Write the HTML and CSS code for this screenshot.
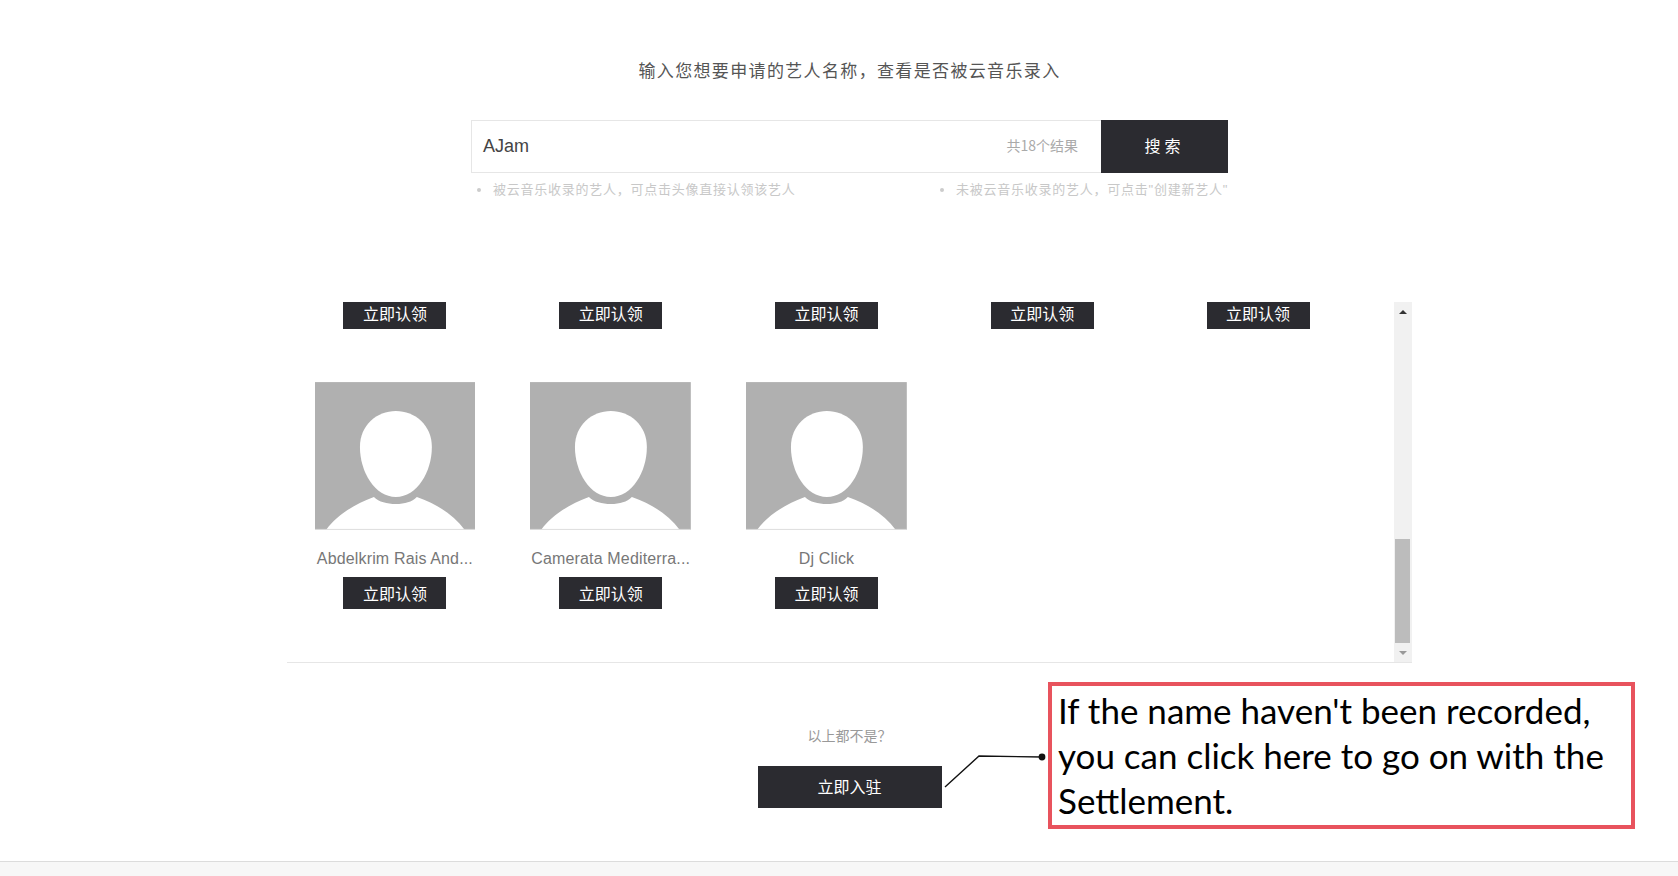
FILE: index.html
```html
<!DOCTYPE html>
<html lang="zh-CN">
<head>
<meta charset="utf-8">
<title>艺人入驻</title>
<link rel="stylesheet" href="styles.css">
</head>
<body>
<div class="page">
  <main class="main">
    <h1 class="title">输入您想要申请的艺人名称，查看是否被云音乐录入</h1>
    <div class="search">
      <div class="search-field">
        <span class="search-value">AJam</span>
        <span class="search-count">共18个结果</span>
      </div>
      <div class="search-btn">搜索</div>
    </div>
    <div class="hints">
      <span class="hint">被云音乐收录的艺人，可点击头像直接认领该艺人</span>
      <span class="hint">未被云音乐收录的艺人，可点击"创建新艺人"</span>
    </div>
    <section class="list">
      <div class="grid">
        <div class="card"><div class="btn btn-clipped">立即认领</div></div>
        <div class="card"><div class="btn btn-clipped">立即认领</div></div>
        <div class="card"><div class="btn btn-clipped">立即认领</div></div>
        <div class="card"><div class="btn btn-clipped">立即认领</div></div>
        <div class="card"><div class="btn btn-clipped">立即认领</div></div>
        <div class="card">
          <svg class="avatar" viewBox="0 0 161 148"><rect width="161" height="148" fill="#b0b0b0"/><path d="M81 29C100 29 117 43 117 65C117 90 102 115 81 115C60 115 45 90 45 65C45 43 62 29 81 29Z" fill="#fff"/><path d="M11 148C22 133 40 122 59 115C64 120 72 122 81 122C90 122 97 120 102 115C122 122 139 133 150 148Z" fill="#fff"/><path d="M0 147.5H161" stroke="#ddd" stroke-width="1"/></svg>
          <div class="name">Abdelkrim Rais And...</div>
          <div class="btn">立即认领</div>
        </div>
        <div class="card">
          <svg class="avatar" viewBox="0 0 161 148"><rect width="161" height="148" fill="#b0b0b0"/><path d="M81 29C100 29 117 43 117 65C117 90 102 115 81 115C60 115 45 90 45 65C45 43 62 29 81 29Z" fill="#fff"/><path d="M11 148C22 133 40 122 59 115C64 120 72 122 81 122C90 122 97 120 102 115C122 122 139 133 150 148Z" fill="#fff"/><path d="M0 147.5H161" stroke="#ddd" stroke-width="1"/></svg>
          <div class="name">Camerata Mediterra...</div>
          <div class="btn">立即认领</div>
        </div>
        <div class="card">
          <svg class="avatar" viewBox="0 0 161 148"><rect width="161" height="148" fill="#b0b0b0"/><path d="M81 29C100 29 117 43 117 65C117 90 102 115 81 115C60 115 45 90 45 65C45 43 62 29 81 29Z" fill="#fff"/><path d="M11 148C22 133 40 122 59 115C64 120 72 122 81 122C90 122 97 120 102 115C122 122 139 133 150 148Z" fill="#fff"/><path d="M0 147.5H161" stroke="#ddd" stroke-width="1"/></svg>
          <div class="name">Dj Click</div>
          <div class="btn">立即认领</div>
        </div>
      </div>
      <div class="scrollbar">
        <div class="arrow arrow-up"></div>
        <div class="thumb"></div>
        <div class="arrow arrow-down"></div>
      </div>
    </section>
    <p class="none-text">以上都不是？</p>
    <div class="settle-btn">立即入驻</div>
  </main>
  <footer class="footer"></footer>

  <svg class="connector" viewBox="0 0 110 50" width="110" height="50"><path d="M1 48L35 17L98 18" fill="none" stroke="#111" stroke-width="1.4"/><circle cx="98" cy="18" r="3.4" fill="#111"/></svg>
  <div class="note">If the name haven't been recorded, you can click here to go on with the Settlement.</div>
</div>
</body>
</html>
```

FILE: styles.css
```css
* { box-sizing: border-box; }
html, body { margin: 0; padding: 0; background: #fff; }
body { font-family: "Noto Sans CJK SC", "Liberation Sans", sans-serif; }

.page { position: relative; display: flex; flex-direction: column; height: 100vh; overflow: hidden; }
.main { flex: 1; display: flex; flex-direction: column; align-items: center; padding-left: 21px; }

.title { margin: 58px 0 0; font-size: 17px; line-height: 24px; font-weight: 400; color: #555; letter-spacing: 1.35px; }

.search { display: flex; width: 757px; height: 53px; margin-top: 38px; }
.search-field { flex: 1; display: flex; align-items: center; justify-content: space-between; padding: 0 23px 0 11px; border: 1px solid #e6e6e6; border-right: 0; }
.search-value { font-size: 18px; color: #444; font-family: "Liberation Sans", sans-serif; }
.search-count { font-size: 14px; line-height: 20px; padding-bottom: 3px; color: #aaa; }
.search-btn { width: 127px; padding-bottom: 3px; display: flex; align-items: center; justify-content: center; background: #2b2b30; color: #fff; font-size: 16px; letter-spacing: 4px; }

.hints { display: flex; justify-content: space-between; width: 757px; height: 20px; margin-top: 7px; }
.hint { position: relative; padding-left: 22px; font-family: "Liberation Sans", "Noto Sans CJK SC", sans-serif; font-size: 13px; line-height: 20px; color: #c8c8c8; white-space: nowrap; letter-spacing: .75px; }
.hint::before { content: ""; position: absolute; left: 6px; top: 8px; width: 4px; height: 4px; border-radius: 50%; background: #ccc; }

.list { display: flex; width: 1125px; height: 361px; margin-top: 102px; border-bottom: 1px solid #e6e6e6; }
.grid { flex: 1; display: grid; grid-template-columns: repeat(5, 160.8px); column-gap: 55px; row-gap: 53px; align-content: start; padding-left: 27.5px; }
.card { display: flex; flex-direction: column; align-items: center; }
.avatar { display: block; width: 160.8px; height: 148px; }
.name { width: 161px; margin-top: 19px; font-family: "Liberation Sans", sans-serif; font-size: 16px; line-height: 20px; letter-spacing: .15px; color: #777; text-align: center; white-space: nowrap; }
.btn { width: 103px; height: 32px; margin-top: 8px; padding-bottom: 1px; display: flex; align-items: center; justify-content: center; background: #2b2b30; color: #fff; font-size: 16px; }
.btn-clipped { height: 27px; margin-top: 0; padding-bottom: 5px; }

.scrollbar { width: 18px; display: flex; flex-direction: column; background: #f1f1f1; }
.arrow { height: 19px; flex: none; display: flex; align-items: center; justify-content: center; }
.arrow::before { content: ""; border-left: 4px solid transparent; border-right: 4px solid transparent; }
.arrow-up::before { border-bottom: 4px solid #333; }
.arrow-down::before { border-top: 4px solid #999; }
.thumb { width: 15px; height: 104px; margin: auto 2px 0 1px; background: #bcbcbc; }

.none-text { margin: 62px 0 0; font-size: 14px; line-height: 20px; color: #999; }
.settle-btn { width: 184px; height: 42px; margin-top: 21px; padding-bottom: 2px; display: flex; align-items: center; justify-content: center; background: #2b2b30; color: #fff; font-size: 16px; }

.footer { flex: none; height: 15px; background: #f7f7f7; border-top: 1px solid #dcdcdc; }

.connector { position: absolute; left: 944px; top: 739px; }
.note { position: absolute; left: 1048px; top: 682px; width: 587px; height: 147px; padding: 2px 8px 0 6px; border: 4px solid #e8535d; background: #fff; font-family: Lato, sans-serif; font-size: 35px; line-height: 45px; color: #000; }
```
